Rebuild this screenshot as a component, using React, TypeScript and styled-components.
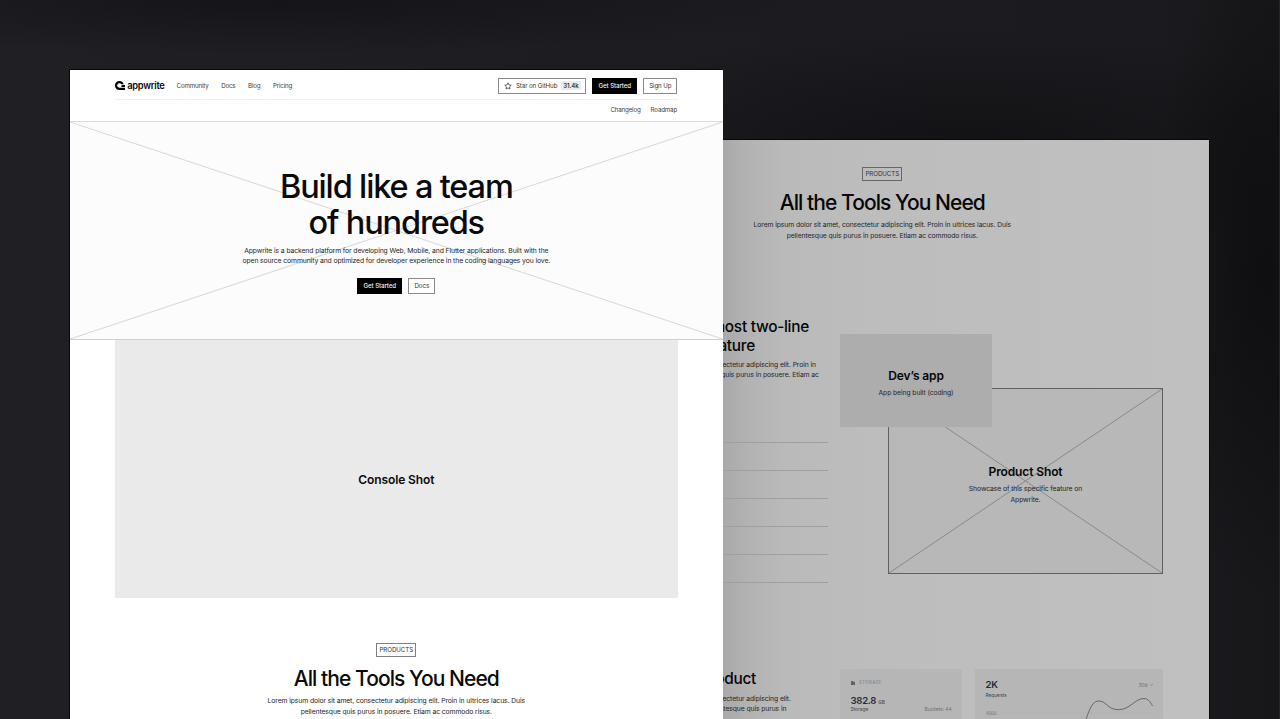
import React from "react";
import styled, { createGlobalStyle } from "styled-components";

const Global = createGlobalStyle`
  *, *::before, *::after { box-sizing: border-box; }
  html, body { margin: 0; background: #18181c; }
  body { font-family: Inter, "Liberation Sans", sans-serif; overflow: hidden; -webkit-font-smoothing: antialiased; }
  h1, h2, h3, p { margin: 0; }
`;

const Desktop = styled.main`
  position: relative;
  width: 1280px;
  height: 719px;
  overflow: hidden;
  border-right: 1px solid #242429;
  background:
    radial-gradient(ellipse 110px 330px at 1262px 270px, rgba(12, 12, 14, 0.75), rgba(12, 12, 14, 0) 100%),
    radial-gradient(ellipse 420px 120px at 960px 150px, rgba(14, 14, 17, 0.7), rgba(14, 14, 17, 0) 100%),
    radial-gradient(ellipse 560px 55px at 280px 0, rgba(15, 15, 18, 0.6), rgba(15, 15, 18, 0) 100%),
    linear-gradient(90deg, #1f1f24 0%, #1c1c21 50%, #1b1b1f 90%, #17171a 100%);
`;

const Frame = styled.section<{ $x: number; $y: number; $dim?: boolean }>`
  position: absolute;
  left: ${(p) => p.$x}px;
  top: ${(p) => p.$y}px;
  width: 652.6px;
  height: 660px;
  overflow: hidden;
  color: ${(p) => (p.$dim ? "#060606" : "#0a0a0a")};
  background: ${(p) =>
    p.$dim
      ? "linear-gradient(90deg, #a8a8a9 0, #a8a8a9 166px, #b2b2b3 190px, #bababb 230px, #bdbdbd 320px, #c0c0c0 100%)"
      : "#fff"};
  box-shadow: ${(p) => (p.$dim ? "1px -1px" : "-1px -1px")} 0 #08080a;
`;

const Header = styled.header`
  height: 52px;
  padding: 8px 45px 0;
  background: #fff;
  border-bottom: 1px solid #dcdcdc;
`;

const NavRow = styled.nav`
  display: flex;
  align-items: center;
  height: 22px;
  padding-bottom: 6px;
  border-bottom: 1px solid #f0f0f0;
`;

const SubNav = styled.nav`
  display: flex;
  justify-content: flex-end;
  align-items: center;
  gap: 10px;
  height: 20px;
  padding-right: 0.6px;
`;

const NavLink = styled.a`
  font-size: 6.2px;
  line-height: 10px;
  letter-spacing: -0.17px;
  color: #3a3a3a;
  white-space: nowrap;
`;

const Brand = styled.div`
  display: flex;
  align-items: center;
  gap: 2.2px;
  margin-right: 12px;
  font-size: 9.3px;
  font-weight: 600;
  line-height: 12px;
  letter-spacing: -0.27px;
`;

const Links = styled.div`
  display: flex;
  gap: 12.6px;
`;

const Actions = styled.div`
  display: flex;
  gap: 6px;
  margin-left: auto;
  margin-right: 0.3px;
`;

const Button = styled.button<{ $solid?: boolean; $w: number }>`
  display: flex;
  align-items: center;
  justify-content: center;
  gap: 4px;
  width: ${(p) => p.$w}px;
  height: 16px;
  padding: 0;
  font-family: inherit;
  font-size: 6.2px;
  line-height: 10px;
  letter-spacing: -0.11px;
  white-space: nowrap;
  font-weight: ${(p) => (p.$solid ? 500 : 400)};
  color: ${(p) => (p.$solid ? "#f2f2f2" : "#333")};
  background: ${(p) => (p.$solid ? "#000" : "#fff")};
  border: 1px solid ${(p) => (p.$solid ? "#000" : "#8a8a8a")};
`;

const Count = styled.span`
  padding: 0 2px;
  height: 9px;
  line-height: 9px;
  color: #222;
  font-weight: 500;
  background: #ebebeb;
  border-radius: 1px;
`;

const Hero = styled.div`
  position: relative;
  display: flex;
  flex-direction: column;
  align-items: center;
  height: 218px;
  padding-top: 46.5px;
  text-align: center;
  background: #fcfcfc;
  border-bottom: 1px solid #cfcfcf;
`;

const Cross = styled.svg`
  position: absolute;
  inset: 0;
  width: 100%;
  height: 100%;
`;

const HeroTitle = styled.h1`
  position: relative;
  font-size: 32.5px;
  font-weight: 500;
  line-height: 36px;
  letter-spacing: -1.15px;
`;

const Copy = styled.p<{ $mt?: number; $indent?: number }>`
  position: relative;
  margin-top: ${(p) => p.$mt ?? 0}px;
  padding-left: ${(p) => p.$indent ?? 0}px;
  font-size: 6.8px;
  line-height: 10.5px;
  letter-spacing: -0.1px;
  color: #262626;
  white-space: nowrap;
`;

const HeroActions = styled.div`
  position: relative;
  display: flex;
  gap: 6px;
  margin-top: 11.5px;
`;

const ConsoleShot = styled.div`
  display: flex;
  align-items: center;
  justify-content: center;
  height: 258px;
  margin: 0 45px;
  padding-top: 22px;
  background: #eaeaea;
`;

const ShotTitle = styled.h3`
  position: relative;
  font-size: 12px;
  font-weight: 600;
  line-height: 16px;
  letter-spacing: -0.12px;
`;

const Intro = styled.div<{ $pt: number }>`
  display: flex;
  flex-direction: column;
  align-items: center;
  padding-top: ${(p) => p.$pt}px;
  text-align: center;
`;

const Tag = styled.span<{ $dim?: boolean }>`
  width: 40px;
  height: 14px;
  font-size: 6.2px;
  line-height: 12px;
  letter-spacing: -0.07px;
  text-align: center;
  color: #333;
  border: 1px solid ${(p) => (p.$dim ? "#666" : "#808080")};
`;

const SectionTitle = styled.h2`
  margin-top: 9px;
  font-size: 21px;
  font-weight: 500;
  line-height: 26px;
  letter-spacing: -0.93px;
  white-space: nowrap;
`;

const Columns = styled.div<{ $mt: number; $h?: number }>`
  display: grid;
  grid-template-columns: 227px 323px;
  column-gap: 12px;
  margin: ${(p) => p.$mt}px 45px 0;
  height: ${(p) => p.$h}px;
`;

const FeatureTitle = styled.h2<{ $pt?: number }>`
  padding-top: ${(p) => p.$pt ?? 0}px;
  font-size: 15.4px;
  font-weight: 500;
  line-height: 18.5px;
  letter-spacing: -0.27px;
  white-space: nowrap;
`;

const TitleLine = styled.span<{ $end: number }>`
  display: block;
  width: ${(p) => p.$end}px;
  text-align: right;
`;

const Rules = styled.div`
  display: grid;
  grid-auto-rows: 28px;
  margin-top: 61px;
`;

const Rule = styled.div`
  border-top: 1px solid #9f9f9f;
`;

const Stage = styled.div`
  position: relative;
  margin-top: 16px;
`;

const DevApp = styled.div`
  position: absolute;
  z-index: 1;
  left: 0;
  top: 0;
  width: 152px;
  height: 93px;
  padding-top: 34px;
  text-align: center;
  background: #adadad;
`;

const ProductShot = styled.div`
  position: absolute;
  left: 48px;
  top: 54px;
  width: 275px;
  height: 186px;
  padding-top: 75px;
  text-align: center;
  background: #b8b8b8;
  border: 1px solid #606060;
`;

const Cards = styled.div`
  display: grid;
  grid-template-columns: 122px 188px;
  gap: 13px;
  height: 60px;
`;

const Card = styled.div<{ $pt: number }>`
  padding: ${(p) => p.$pt}px 10.5px 0;
  color: #565b68;
  background: #b6b6b6;
`;

const CardLabel = styled.div`
  display: flex;
  align-items: center;
  gap: 4px;
  height: 6px;
  font-size: 4.2px;
  line-height: 6px;
  letter-spacing: 0.5px;
  color: #747987;
`;

const Split = styled.div<{ $mt?: number }>`
  display: flex;
  justify-content: space-between;
  align-items: center;
  margin-top: ${(p) => p.$mt ?? 0}px;
`;

const Metric = styled.div<{ $mt?: number }>`
  height: 10px;
  margin-top: ${(p) => p.$mt ?? 0}px;
  font-size: 9.6px;
  font-weight: 600;
  line-height: 10px;
  letter-spacing: -0.3px;
  color: #272b3a;
  small { font-size: 4.6px; letter-spacing: 0; color: #4d5262; }
`;

const Small = styled.span<{ $soft?: boolean }>`
  display: flex;
  align-items: center;
  gap: 2px;
  font-size: 4.9px;
  line-height: 6px;
  letter-spacing: -0.05px;
  color: ${(p) => (p.$soft ? "#6a6e7a" : "#424654")};
`;

const Chart = styled.svg`
  display: block;
  width: 168px;
  height: 30px;
  overflow: visible;
`;

const Tick = styled.text`
  font-size: 4.2px;
  fill: #686c78;
`;

const Diagonals = ({ color }: { color: string }) => (
  <Cross viewBox="0 0 100 100" preserveAspectRatio="none">
    <path d="M0 0L100 100M100 0L0 100" stroke={color} strokeWidth="0.9" vectorEffect="non-scaling-stroke" fill="none" />
  </Cross>
);

const Logo = () => (
  <svg width="10" height="9" viewBox="0 0 24.4 22" fill="#000">
    <path d="M10.75 0A10.95 10.95 0 0 1 21.3 8H15.4A5.48 5.48 0 1 0 10.75 16.43H24.4V21.9H10.75A10.95 10.95 0 0 1 10.75 0Z" />
    <path d="M16.1 9.5H24.4V14.95H14.5A5.5 5.5 0 0 0 16.1 9.5Z" />
  </svg>
);

const Star = () => (
  <svg width="8" height="8" viewBox="0 0 24 24" fill="none" stroke="#333" strokeWidth="2.2" strokeLinejoin="round">
    <path d="M12 2.5l2.9 6.3 6.8.8-5 4.7 1.3 6.8-6-3.4-6 3.4 1.3-6.8-5-4.7 6.8-.8z" />
  </svg>
);

const ProductsIntro = ({ top, dim }: { top: number; dim?: boolean }) => (
  <Intro $pt={top}>
    <Tag $dim={dim}>PRODUCTS</Tag>
    <SectionTitle>All the Tools You Need</SectionTitle>
    <Copy $mt={4}>
      Lorem ipsum dolor sit amet, consectetur adipiscing elit. Proin in ultrices lacus. Duis
      <br />
      pellentesque quis purus in posuere. Etiam ac commodo risus.
    </Copy>
  </Intro>
);

export default function App() {
  return (
    <Desktop>
      <Global />
      <Frame $x={556} $y={140} $dim>
        <ProductsIntro top={27} dim />
        <Columns $mt={77} $h={351}>
          <div>
            <FeatureTitle>
              <TitleLine $end={208}>most two-line</TitleLine>
              <TitleLine $end={154}>feature</TitleLine>
            </FeatureTitle>
            <Copy $mt={4.5} $indent={18}>
              Lorem ipsum dolor sit amet, consectetur adipiscing elit. Proin in
              <br />
              ultrices lacus. Duis pellentesque quis purus in posuere. Etiam ac
            </Copy>
            <Rules>
              {[0, 1, 2, 3, 4, 5].map((n) => (
                <Rule key={n} />
              ))}
            </Rules>
          </div>
          <Stage>
            <DevApp>
              <ShotTitle>Dev’s app</ShotTitle>
              <Copy $mt={4}>App being built (coding)</Copy>
            </DevApp>
            <ProductShot>
              <Diagonals color="#858585" />
              <ShotTitle>Product Shot</ShotTitle>
              <Copy $mt={4}>
                Showcase of this specific feature on
                <br />
                Appwrite.
              </Copy>
            </ProductShot>
          </Stage>
        </Columns>
        <Columns $mt={0}>
          <div>
            <FeatureTitle $pt={1}>
              <TitleLine $end={155}>product</TitleLine>
            </FeatureTitle>
            <Copy $mt={5} $indent={18}>
              Lorem ipsum dolor sit amet, consectetur adipiscing elit.
              <br />
              Proin in ultrices lacus. Duis pellentesque quis purus in
            </Copy>
          </div>
          <Cards>
            <Card $pt={11}>
              <CardLabel>
                <svg width="4.5" height="4" viewBox="0 0 9 8">
                  <path d="M0 0h3.5l1 1.3H9V8H0z" fill="#5c6274" />
                </svg>
                STORAGE
              </CardLabel>
              <Metric $mt={9.5}>
                382.8 <small>GB</small>
              </Metric>
              <Split>
                <Small>Storage</Small>
                <Small $soft>Buckets: 44</Small>
              </Split>
            </Card>
            <Card $pt={11}>
              <Split>
                <Metric>2K</Metric>
                <Small $soft>
                  30d
                  <svg width="3" height="2" viewBox="0 0 6 4" fill="none" stroke="#70747f" strokeWidth="1.4">
                    <path d="M0.5 0.5L3 3L5.5 0.5" />
                  </svg>
                </Small>
              </Split>
              <Split $mt={2}>
                <Small>Requests</Small>
              </Split>
              <Chart viewBox="0 0 168 30" fill="none">
                <Tick x="0" y="16.5">4000</Tick>
                <path d="M14 15H167" stroke="#aeaeae" strokeWidth="0.5" />
                <path d="M98 27C101 21 104 3 112.5 3S121 11.7 132.5 11.7S149 0.5 157.8 0.5C162 0.5 164.5 4 166.5 8" stroke="#5e5e60" strokeWidth="0.9" />
              </Chart>
            </Card>
          </Cards>
        </Columns>
      </Frame>
      <Frame $x={70} $y={70}>
        <Header>
          <NavRow>
            <Brand>
              <Logo />
              appwrite
            </Brand>
            <Links>
              {["Community", "Docs", "Blog", "Pricing"].map((label) => (
                <NavLink key={label}>{label}</NavLink>
              ))}
            </Links>
            <Actions>
              <Button $w={88}>
                <Star />
                Star on GitHub
                <Count>31.4k</Count>
              </Button>
              <Button $w={45} $solid>
                Get Started
              </Button>
              <Button $w={34}>Sign Up</Button>
            </Actions>
          </NavRow>
          <SubNav>
            <NavLink>Changelog</NavLink>
            <NavLink>Roadmap</NavLink>
          </SubNav>
        </Header>
        <Hero>
          <Diagonals color="#d2d2d2" />
          <HeroTitle>
            Build like a team
            <br />
            of hundreds
          </HeroTitle>
          <Copy $mt={5}>
            Appwrite is a backend platform for developing Web, Mobile, and Flutter applications. Built with the
            <br />
            open source community and optimized for developer experience in the coding languages you love.
          </Copy>
          <HeroActions>
            <Button $w={45} $solid>
              Get Started
            </Button>
            <Button $w={27}>Docs</Button>
          </HeroActions>
        </Hero>
        <ConsoleShot>
          <ShotTitle>Console Shot</ShotTitle>
        </ConsoleShot>
        <ProductsIntro top={45} />
      </Frame>
    </Desktop>
  );
}
